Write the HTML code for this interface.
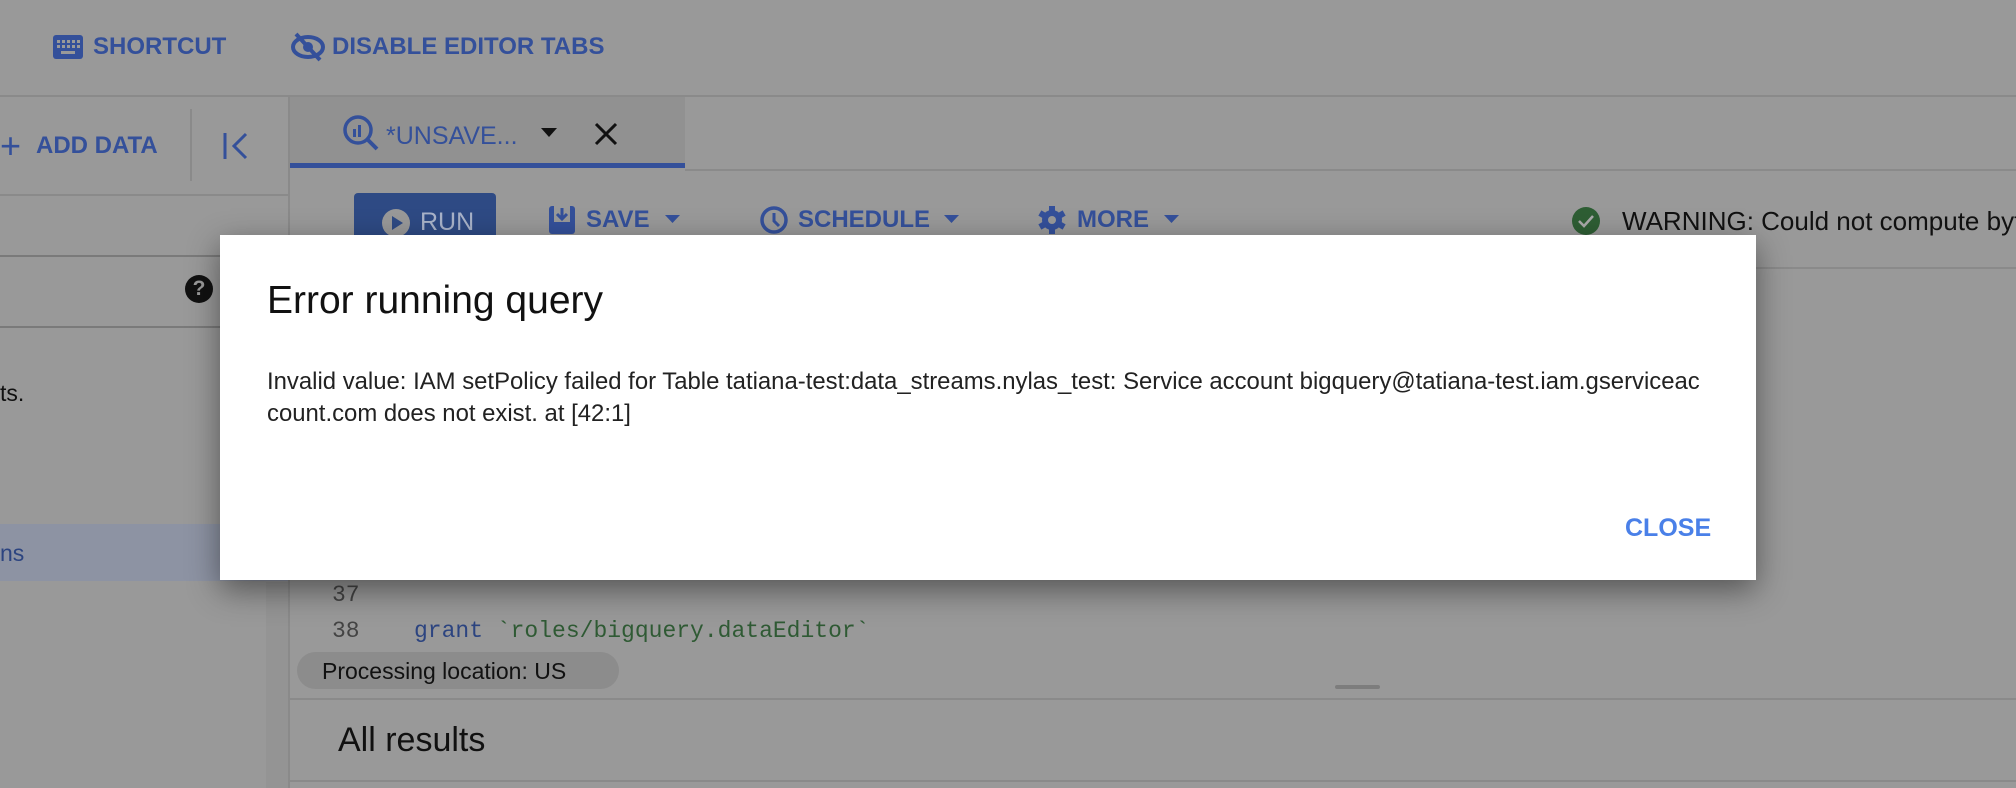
<!DOCTYPE html>
<html><head><meta charset="utf-8"><style>
*{margin:0;padding:0;box-sizing:border-box}
body{width:2016px;height:788px;overflow:hidden;background:#999;font-family:"Liberation Sans",sans-serif;position:relative}
.a{position:absolute;white-space:nowrap}
.blue{color:#34509a;font-weight:bold;font-size:24px}
.hl{position:absolute;height:2px;background:#8a8a8a}
.vl{position:absolute;width:2px;background:#8a8a8a}
</style></head><body>
<svg class="a" style="left:53px;top:35px" width="30" height="24" viewBox="0 0 30 24"><rect x="0" y="0" width="30" height="24" rx="3" fill="#34509a"/><g fill="#999"><rect x="4" y="5" width="3" height="3"/><rect x="9" y="5" width="3" height="3"/><rect x="14" y="5" width="3" height="3"/><rect x="19" y="5" width="3" height="3"/><rect x="24" y="5" width="3" height="3"/><rect x="4" y="10" width="3" height="3"/><rect x="9" y="10" width="3" height="3"/><rect x="14" y="10" width="3" height="3"/><rect x="19" y="10" width="3" height="3"/><rect x="24" y="10" width="3" height="3"/><rect x="8" y="16" width="14" height="3"/></g></svg>
<div class="a blue" style="left:93px;top:33px">SHORTCUT</div>
<svg class="a" style="left:291px;top:32px" width="34" height="30" viewBox="0 0 34 30"><ellipse cx="17" cy="15" rx="15" ry="10" fill="none" stroke="#34509a" stroke-width="4"/><circle cx="17" cy="15" r="5" fill="#34509a"/><line x1="5" y1="2" x2="29" y2="28" stroke="#34509a" stroke-width="4"/></svg>
<div class="a blue" style="left:332px;top:33px">DISABLE EDITOR TABS</div>
<div class="hl" style="left:0;top:95px;width:2016px"></div>

<div class="a" style="left:0;top:128px;font-size:36px;color:#34509a;line-height:36px">+</div>
<div class="a blue" style="left:36px;top:132px">ADD DATA</div>
<div class="vl" style="left:190px;top:109px;height:72px"></div>
<svg class="a" style="left:222px;top:131px" width="28" height="30"><line x1="3" y1="2" x2="3" y2="28" stroke="#34509a" stroke-width="3"/><polyline points="24,3 12,15 24,27" fill="none" stroke="#34509a" stroke-width="3"/></svg>
<div class="hl" style="left:0;top:194px;width:288px"></div>
<div class="hl" style="left:0;top:255px;width:288px;background:#7a7a7a"></div>
<div class="a" style="left:185px;top:275px;width:28px;height:28px;border-radius:50%;background:#111;color:#999;font-weight:bold;font-size:21px;text-align:center;line-height:28px">?</div>
<div class="hl" style="left:0;top:326px;width:288px;background:#7a7a7a"></div>
<div class="a" style="left:0;top:380px;font-size:23px;color:#111">ts.</div>
<div class="a" style="left:0;top:524px;width:288px;height:57px;background:#8d93a3"></div>
<div class="a" style="left:0;top:540px;font-size:23px;color:#2c4480">ns</div>
<div class="vl" style="left:288px;top:96px;height:692px"></div>
<div class="a" style="left:266px;top:582px;width:22px;height:206px;background:#949494"></div>

<div class="a" style="left:290px;top:97px;width:395px;height:71px;background:#919191"></div>
<div class="a" style="left:290px;top:163px;width:395px;height:5px;background:#34509a"></div>
<svg class="a" style="left:342px;top:114px" width="40" height="40"><circle cx="16" cy="16" r="13" fill="none" stroke="#34509a" stroke-width="3.5"/><rect x="11" y="15" width="3" height="8" fill="#34509a"/><rect x="16" y="11" width="3" height="12" fill="#34509a"/><line x1="26" y1="26" x2="35" y2="35" stroke="#34509a" stroke-width="4"/></svg>
<div class="a blue" style="left:386px;top:122px;font-weight:normal;font-size:25px">*UNSAVE...</div>
<svg class="a" style="left:541px;top:128px" width="16" height="10"><polygon points="0,0 16,0 8,9" fill="#111"/></svg>
<svg class="a" style="left:594px;top:122px" width="24" height="24"><path d="M2 2L22 22M22 2L2 22" stroke="#111" stroke-width="3"/></svg>
<div class="hl" style="left:685px;top:169px;width:1331px"></div>

<div class="a" style="left:354px;top:193px;width:142px;height:60px;background:#2e4a84;border-radius:4px"></div>
<svg class="a" style="left:381px;top:208px" width="30" height="30"><circle cx="15" cy="15" r="14" fill="#999"/><polygon points="11,8 22,15 11,22" fill="#2e4a84"/></svg>
<div class="a" style="left:420px;top:208px;font-size:25px;color:#a9b3c9">RUN</div>
<svg class="a" style="left:548px;top:205px" width="28" height="30"><rect x="1" y="1" width="26" height="28" rx="3" fill="#34509a"/><rect x="6" y="1" width="16" height="16" fill="#999"/><path d="M14 3v10M9 9l5 5 5-5" stroke="#34509a" stroke-width="3" fill="none"/></svg>
<div class="a blue" style="left:586px;top:206px">SAVE</div>
<svg class="a" style="left:665px;top:215px" width="15" height="9"><polygon points="0,0 15,0 7.5,8" fill="#34509a"/></svg>
<svg class="a" style="left:759px;top:205px" width="30" height="30"><circle cx="15" cy="15" r="12" fill="none" stroke="#34509a" stroke-width="3.5"/><path d="M15 8v8l5 5" stroke="#34509a" stroke-width="3" fill="none"/></svg>
<div class="a blue" style="left:798px;top:206px">SCHEDULE</div>
<svg class="a" style="left:944px;top:215px" width="15" height="9"><polygon points="0,0 15,0 7.5,8" fill="#34509a"/></svg>
<svg class="a" style="left:1037px;top:205px" width="30" height="30" viewBox="0 0 30 30"><g fill="#34509a" transform="translate(15 15)"><circle r="10"/><rect x="-3" y="-14" width="6" height="28"/><rect x="-3" y="-14" width="6" height="28" transform="rotate(60)"/><rect x="-3" y="-14" width="6" height="28" transform="rotate(120)"/></g><circle cx="15" cy="15" r="4" fill="#999"/></svg>
<div class="a blue" style="left:1077px;top:206px">MORE</div>
<svg class="a" style="left:1164px;top:215px" width="15" height="9"><polygon points="0,0 15,0 7.5,8" fill="#34509a"/></svg>
<svg class="a" style="left:1571px;top:206px" width="30" height="30"><circle cx="15" cy="15" r="14" fill="#2e5e34"/><path d="M8 15l5 5 9-10" stroke="#aaa" stroke-width="2.5" fill="none"/></svg>
<div class="a" style="left:1622px;top:206px;font-size:26px;color:#111">WARNING: Could not compute byt</div>
<div class="hl" style="left:290px;top:267px;width:1726px"></div>

<div class="a" style="left:332px;top:582px;font-family:'Liberation Mono',monospace;font-size:23px;color:#444">37</div>
<div class="a" style="left:332px;top:618px;font-family:'Liberation Mono',monospace;font-size:23px;color:#444">38</div>
<div class="a" style="left:414px;top:618px;font-family:'Liberation Mono',monospace;font-size:23px;color:#2c4480">grant <span style="color:#2f5a34">`roles/bigquery.dataEditor`</span></div>
<div class="a" style="left:297px;top:652px;width:322px;height:37px;border-radius:19px;background:#8c8c8c;font-size:23px;color:#111;padding:6px 0 0 25px">Processing location: US</div>
<div class="a" style="left:1335px;top:685px;width:45px;height:4px;background:#7d7d7d;border-radius:2px"></div>
<div class="hl" style="left:290px;top:698px;width:1726px"></div>
<div class="a" style="left:338px;top:721px;font-size:34px;color:#111">All results</div>
<div class="hl" style="left:290px;top:780px;width:1726px"></div>

<div class="a" style="left:220px;top:235px;width:1536px;height:345px;background:#fff;box-shadow:0 10px 30px rgba(0,0,0,0.45)"></div>
<div class="a" style="left:267px;top:279px;font-size:39px;color:#111">Error running query</div>
<div class="a" style="left:267px;top:366px;font-size:23.9px;line-height:32px;color:#222">Invalid value: IAM setPolicy failed for Table tatiana-test:data_streams.nylas_test: Service account bigquery@tatiana-test.iam.gserviceac<br>count.com does not exist. at [42:1]</div>
<div class="a" style="left:1625px;top:514px;font-size:25px;font-weight:bold;color:#4a80e8">CLOSE</div>
</body></html>
